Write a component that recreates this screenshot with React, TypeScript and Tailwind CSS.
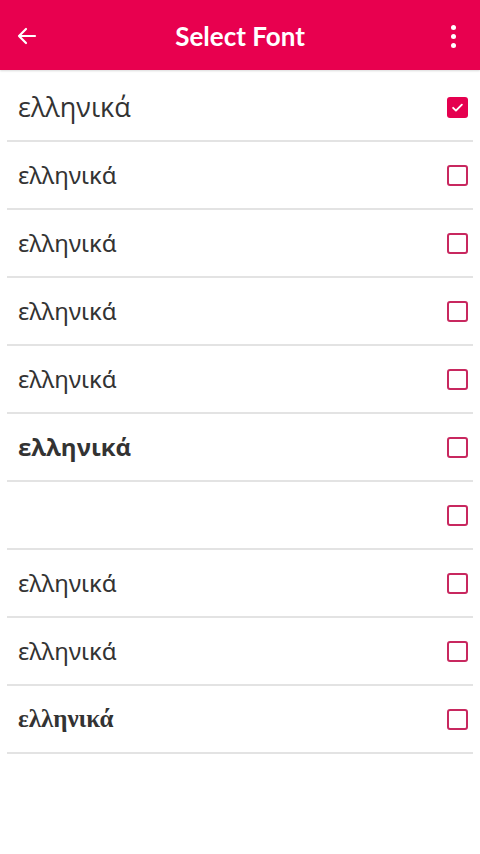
import { useState } from "react";

type FontOption = {
  id: number;
  label: string;
  className: string;
};

const fonts: FontOption[] = [
  { id: 1, label: "ελληνικά", className: "font-['Open_Sans',sans-serif] text-[27px]" },
  { id: 2, label: "ελληνικά", className: "font-['Noto_Sans',sans-serif] text-[24px]" },
  { id: 3, label: "ελληνικά", className: "font-['Noto_Sans',sans-serif] text-[24px]" },
  { id: 4, label: "ελληνικά", className: "font-['Noto_Sans',sans-serif] text-[24px]" },
  { id: 5, label: "ελληνικά", className: "font-['Noto_Sans',sans-serif] text-[24px]" },
  { id: 6, label: "ελληνικά", className: "font-['Open_Sans',sans-serif] font-bold text-[24px]" },
  { id: 7, label: "", className: "text-[24px]" },
  { id: 8, label: "ελληνικά", className: "font-['Noto_Sans',sans-serif] text-[24px]" },
  { id: 9, label: "ελληνικά", className: "font-['Noto_Sans',sans-serif] text-[24px]" },
  { id: 10, label: "ελληνικά", className: "font-['Liberation_Serif',serif] font-bold text-[25px]" },
];

function Checkbox({ checked }: { checked: boolean }) {
  if (checked) {
    return (
      <div className="flex h-[21px] w-[21px] items-center justify-center rounded-[3px] bg-[#e5004f]">
        <svg width="15" height="15" viewBox="0 0 24 24" fill="none">
          <path
            d="M5 12.5l4.5 4.5L19 7.5"
            stroke="white"
            strokeWidth="3"
            strokeLinecap="round"
            strokeLinejoin="round"
          />
        </svg>
      </div>
    );
  }

  return (
    <div className="h-[21px] w-[21px] rounded-[3px] border-2 border-[#c8285f]" />
  );
}

function App() {
  const [selected, setSelected] = useState<number>(1);

  return (
    <div className="min-h-[854px] w-[480px] bg-white">
      <header className="flex h-[70px] items-center justify-between bg-[#e8004f] px-[15px] pt-[2px] shadow-[0_1px_2px_rgba(0,0,0,0.15)]">
        <svg width="24" height="24" viewBox="0 0 24 24" fill="none">
          <path
            d="M20 12H4M11 5l-7 7 7 7"
            stroke="white"
            strokeWidth="2.2"
            strokeLinecap="round"
            strokeLinejoin="round"
          />
        </svg>
        <h1 className="font-['Lato',sans-serif] text-[26px] font-bold text-white">
          Select Font
        </h1>
        <div className="flex w-[24px] flex-col items-center gap-[4px]">
          <span className="h-[5px] w-[5px] rounded-full bg-white" />
          <span className="h-[5px] w-[5px] rounded-full bg-white" />
          <span className="h-[5px] w-[5px] rounded-full bg-white" />
        </div>
      </header>

      <ul className="pt-[4px]">
        {fonts.map((font) => (
          <li
            key={font.id}
            onClick={() => setSelected(font.id)}
            className="mx-[7px] flex h-[68px] items-center justify-between border-b-2 border-[#e3e3e3] pl-[11px] pr-[5px]"
          >
            <span className={`text-[#333333] ${font.className}`}>
              {font.label}
            </span>
            <Checkbox checked={selected === font.id} />
          </li>
        ))}
      </ul>
    </div>
  );
}

export default App;
